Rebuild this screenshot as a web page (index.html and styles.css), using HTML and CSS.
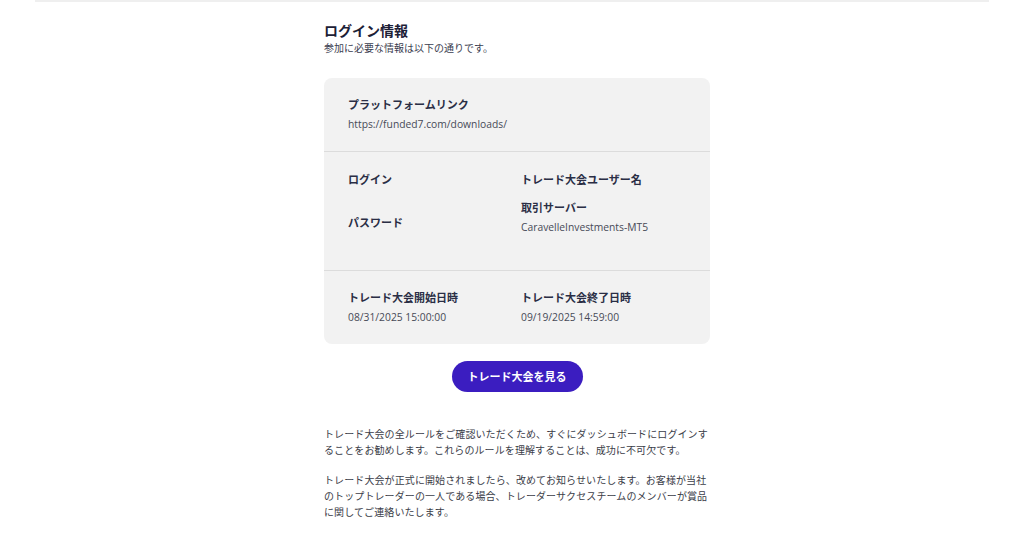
FILE: index.html
```html
<!DOCTYPE html>
<html lang="ja">
<head>
  <meta charset="UTF-8">
  <meta name="viewport" content="width=device-width, initial-scale=1.0">
  <title>ログイン情報</title>
  <link rel="stylesheet" href="styles.css">
</head>
<body>
  <div class="top-strip"></div>

  <div class="content">
    <h1 class="title">ログイン情報</h1>
    <p class="subtitle">参加に必要な情報は以下の通りです。</p>

    <div class="info-card">
      <div class="card-section first">
        <div class="field">
          <div class="label">プラットフォームリンク</div>
          <div class="value">https://funded7.com/downloads/</div>
        </div>
      </div>

      <div class="card-section account">
        <div class="field">
          <div class="label">ログイン</div>
        </div>
        <div class="field">
          <div class="label">トレード大会ユーザー名</div>
        </div>
        <div class="field password">
          <div class="label">パスワード</div>
        </div>
        <div class="field">
          <div class="label">取引サーバー</div>
          <div class="value">CaravelleInvestments-MT5</div>
        </div>
      </div>

      <div class="card-section dates">
        <div class="field">
          <div class="label">トレード大会開始日時</div>
          <div class="value">08/31/2025 15:00:00</div>
        </div>
        <div class="field">
          <div class="label">トレード大会終了日時</div>
          <div class="value">09/19/2025 14:59:00</div>
        </div>
      </div>
    </div>

    <div class="button-row">
      <a class="view-button" href="#">トレード大会を見る</a>
    </div>

    <div class="notes">
      <p>トレード大会の全ルールをご確認いただくため、すぐにダッシュボードにログインすることをお勧めします。これらのルールを理解することは、成功に不可欠です。</p>
      <p>トレード大会が正式に開始されましたら、改めてお知らせいたします。お客様が当社のトップトレーダーの一人である場合、トレーダーサクセスチームのメンバーが賞品に関してご連絡いたします。</p>
    </div>
  </div>
</body>
</html>
```

FILE: styles.css
```css
body {
  margin: 0;
  background-color: #ffffff;
  font-family: "Open Sans", "Noto Sans CJK JP", sans-serif;
  color: #2b2f45;
}

.top-strip {
  height: 2px;
  margin: 0 35px;
  background-color: #efefef;
}

.content {
  width: 386px;
  margin: 0 auto;
  padding: 19px 0 0 10px;
}

.title {
  margin: 0;
  font-size: 14px;
  line-height: 20px;
  font-weight: 700;
  color: #1c2036;
}

.subtitle {
  margin: 0;
  font-size: 10px;
  line-height: 14px;
  color: #3a3d4f;
}

.info-card {
  margin-top: 23px;
  background-color: #f2f2f2;
  border-radius: 8px;
}

.card-section {
  padding: 19px 24px;
  border-top: 1px solid #dcdcdc;
}

.card-section.first {
  border-top: none;
}

.card-section.account,
.card-section.dates {
  display: grid;
  grid-template-columns: 173px 1fr;
}

.card-section.account {
  padding: 20px 24px 35px;
  row-gap: 12px;
}

.card-section.dates {
  padding: 19px 24px 19px;
}

.field.password {
  padding-top: 15px;
}

.label {
  font-size: 11px;
  line-height: 16px;
  font-weight: 700;
  color: #2a2e45;
}

.value {
  margin-top: 3px;
  font-size: 10.3px;
  line-height: 16px;
  color: #474a57;
}

.button-row {
  display: flex;
  justify-content: center;
  margin-top: 17px;
}

.view-button {
  display: block;
  height: 31px;
  line-height: 31px;
  padding: 0 16px;
  border-radius: 16px;
  background-color: #3b1dc0;
  color: #ffffff;
  font-size: 11px;
  font-weight: 700;
  text-decoration: none;
}

.notes {
  margin-top: 34px;
}

.notes p {
  margin: 0 0 14px;
  font-size: 10px;
  line-height: 16px;
  letter-spacing: 0.1px;
  color: #3b3d48;
}
```
